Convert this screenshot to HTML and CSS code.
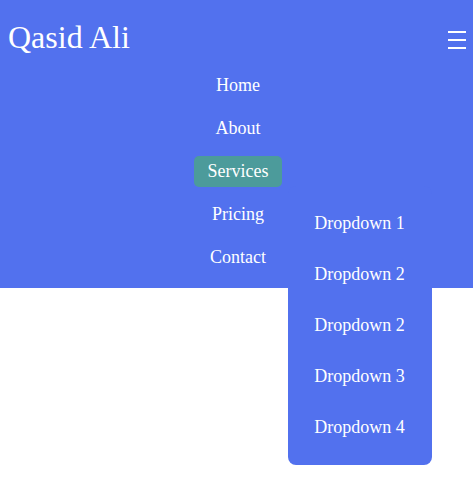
FILE: index.html
```html
<!DOCTYPE html>
<html lang="en">
<head>
<meta charset="utf-8">
<title>Qasid Ali</title>
<link rel="stylesheet" href="styles.css">
</head>
<body>
<header class="header">
  <div class="top-row">
    <h1 class="logo">Qasid Ali</h1>
    <button class="burger" aria-label="Menu"><span></span><span></span><span></span></button>
  </div>
  <nav class="nav">
    <ul class="nav-list">
      <li class="nav-item"><a href="#" class="nav-link">Home</a></li>
      <li class="nav-item"><a href="#" class="nav-link">About</a></li>
      <li class="nav-item has-drop"><a href="#" class="nav-link active">Services</a>
        <ul class="dropdown">
          <li class="drop-item"><a href="#" class="drop-link">Dropdown 1</a></li>
          <li class="drop-item"><a href="#" class="drop-link">Dropdown 2</a></li>
          <li class="drop-item"><a href="#" class="drop-link">Dropdown 2</a></li>
          <li class="drop-item"><a href="#" class="drop-link">Dropdown 3</a></li>
          <li class="drop-item"><a href="#" class="drop-link">Dropdown 4</a></li>
        </ul>
      </li>
      <li class="nav-item"><a href="#" class="nav-link">Pricing</a></li>
      <li class="nav-item"><a href="#" class="nav-link">Contact</a></li>
    </ul>
  </nav>
</header>
</body>
</html>
```
FILE: styles.css
```css
* { box-sizing: border-box; }
html, body { margin: 0; padding: 0; }
html { background: #ffffff; }
body { font-family: "Liberation Serif", "Times New Roman", serif; color: #ffffff; min-height: 495px; }

.header {
  position: relative;
  background: #5271ee;
  padding-bottom: 9px;
}

.top-row {
  display: flex;
  justify-content: space-between;
  align-items: flex-start;
  height: 64px;
  padding: 19px 7px 0 8px;
}

.logo {
  margin: 0;
  font-size: 32px;
  font-weight: normal;
  line-height: 36px;
}

.burger {
  display: flex;
  flex-direction: column;
  gap: 6px;
  margin-top: 12px;
  padding: 0;
  border: 0;
  background: none;
  cursor: pointer;
}
.burger span {
  display: block;
  width: 18px;
  height: 2px;
  background: #ffffff;
}

.nav-list {
  list-style: none;
  margin: 0 0 0 3px;
  padding: 0;
  display: flex;
  flex-direction: column;
  align-items: center;
}

.nav-item {
  position: relative;
  padding: 6px 0;
}

.nav-link {
  display: block;
  padding: 6px 14px;
  line-height: 19px;
  font-size: 18px;
  color: #ffffff;
  text-decoration: none;
  border-radius: 5px;
}
.nav-link.active { background: #4c9b9b; }

.dropdown {
  position: absolute;
  z-index: 10;
  left: 94px;
  top: 36px;
  width: 144px;
  height: 279px;
  margin: 0;
  padding: 12px 0;
  list-style: none;
  background-color: #5271ee;
  border-radius: 8px;
}

.drop-item {
  display: block;
}

.drop-link {
  display: flex;
  align-items: center;
  justify-content: center;
  height: 51px;
  font-size: 18px;
  color: #ffffff;
  text-decoration: none;
}
```
